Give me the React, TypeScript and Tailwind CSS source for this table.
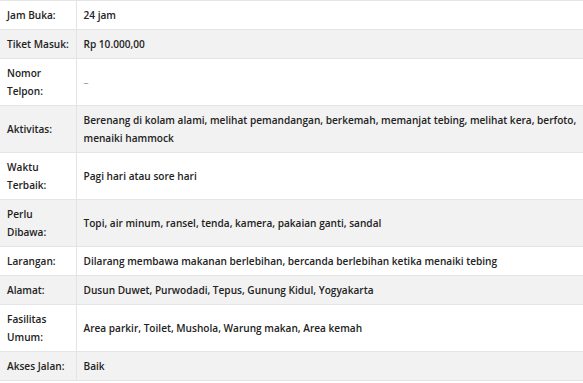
const rows: [string, string][] = [
  ["Jam Buka:", "24 jam"],
  ["Tiket Masuk:", "Rp 10.000,00"],
  ["Nomor Telpon:", "–"],
  [
    "Aktivitas:",
    "Berenang di kolam alami, melihat pemandangan, berkemah, memanjat tebing, melihat kera, berfoto, menaiki hammock",
  ],
  ["Waktu Terbaik:", "Pagi hari atau sore hari"],
  ["Perlu Dibawa:", "Topi, air minum, ransel, tenda, kamera, pakaian ganti, sandal"],
  ["Larangan:", "Dilarang membawa makanan berlebihan, bercanda berlebihan ketika menaiki tebing"],
  ["Alamat:", "Dusun Duwet, Purwodadi, Tepus, Gunung Kidul, Yogyakarta"],
  ["Fasilitas Umum:", "Area parkir, Toilet, Mushola, Warung makan, Area kemah"],
  ["Akses Jalan:", "Baik"],
];

export default function App() {
  return (
    <div className="w-[583px] h-[383px] overflow-hidden bg-white">
      <table
        className="w-[590px] table-fixed border-collapse text-[10.1px] leading-[18px] font-semibold text-[#222]"
        style={{ fontFamily: '"Open Sans", "Noto Sans", sans-serif' }}
      >
        <colgroup>
          <col className="w-[76px]" />
          <col />
        </colgroup>
        <tbody>
          {rows.map(([label, value], i) => (
            <tr
              key={label}
              className={`border-t border-b border-[#e4e4e4] ${i % 2 === 1 ? "bg-[#f2f2f2]" : "bg-white"}`}
            >
              <td className="border-r border-[#e4e4e4] pl-[7px] pr-[2px] py-[5px] align-middle">{label}</td>
              <td className="px-[7px] py-[5px] align-middle">
                {value === "–" ? <span className="text-[#999] font-normal">–</span> : value}
              </td>
            </tr>
          ))}
        </tbody>
      </table>
    </div>
  );
}
